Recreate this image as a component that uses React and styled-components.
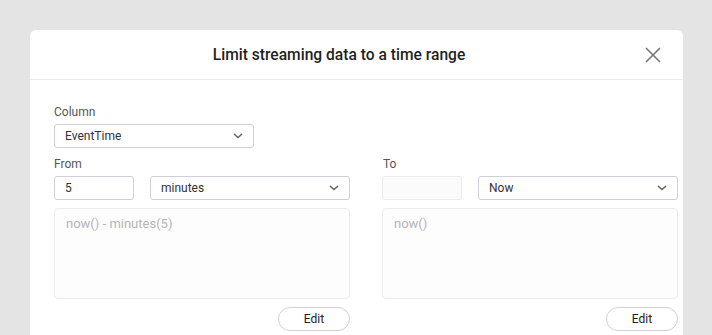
import React from "react";
import styled, { createGlobalStyle } from "styled-components";

const GlobalStyle = createGlobalStyle`
  html, body {
    margin: 0;
    padding: 0;
    background: #e4e4e4;
    font-family: Roboto, "Liberation Sans", Arial, sans-serif;
  }
`;

const Page = styled.div`
  padding: 30px 29px 0 30px;
  height: 335px;
  box-sizing: border-box;
  overflow: hidden;
`;

const Dialog = styled.div`
  background: #fff;
  border-radius: 6px 6px 0 0;
  height: 320px;
`;

const Header = styled.div`
  display: flex;
  align-items: center;
  height: 49px;
  border-bottom: 1px solid #ececec;
  padding-left: 13px;
`;

const Title = styled.div`
  flex: 1;
  text-align: center;
  font-size: 15.6px;
  font-weight: 500;
  color: #1f1f1f;
`;

const CloseButton = styled.button`
  width: 36px;
  height: 36px;
  margin-right: 12px;
  border: none;
  background: none;
  display: flex;
  align-items: center;
  justify-content: center;
  padding: 0;
  cursor: pointer;
`;

const Body = styled.div`
  padding: 24px 6px 0 24px;
`;

const Label = styled.div`
  font-size: 12px;
  line-height: 16px;
  color: #555;
  margin-bottom: 4px;
  padding-left: ${(p) => p.$indent || 0}px;
`;

const Columns = styled.div`
  display: grid;
  grid-template-columns: 296px 296px;
  column-gap: 32px;
  margin-top: 8px;
`;

const Column = styled.div`
  display: flex;
  flex-direction: column;
`;

const InputRow = styled.div`
  display: flex;
  gap: 16px;
`;

const Box = styled.div`
  box-sizing: border-box;
  height: 24px;
  width: ${(p) => p.$width || "auto"};
  flex: ${(p) => (p.$grow ? 1 : "none")};
  border: 1px solid ${(p) => (p.$disabled ? "#ececf0" : "#cfcfd8")};
  background: ${(p) => (p.$disabled ? "#fbfbfb" : "#fff")};
  border-radius: 3px;
  display: flex;
  align-items: center;
  padding: 0 10px;
  font-size: 12px;
  color: #333;
`;

const SelectText = styled.span`
  flex: 1;
`;

const Expression = styled.div`
  box-sizing: border-box;
  margin-top: 8px;
  height: 91px;
  border: 1px solid #ececef;
  border-radius: 4px;
  background: #fdfdfd;
  padding: 7px 11px;
  font-size: 13px;
  color: #b5b5b5;
`;

const Actions = styled.div`
  display: flex;
  justify-content: flex-end;
  margin-top: 8px;
`;

const EditButton = styled.button`
  box-sizing: border-box;
  width: 72px;
  height: 24px;
  border-radius: 12px;
  border: 1px solid #cfcfd8;
  background: #fff;
  font-family: inherit;
  font-size: 12px;
  color: #222;
  cursor: pointer;
`;

const Chevron = () => (
  <svg width="10" height="6" viewBox="0 0 10 6">
    <path d="M1 1l4 3.5L9 1" fill="none" stroke="#666" strokeWidth="1.6" />
  </svg>
);

const Select = ({ value, width, grow }) => (
  <Box $width={width} $grow={grow}>
    <SelectText>{value}</SelectText>
    <Chevron />
  </Box>
);

const Range = ({ label, amount, unit, expression, disabled, indent }) => (
  <Column>
    <Label $indent={indent}>{label}</Label>
    <InputRow>
      <Box $width="80px" $disabled={disabled}>
        {amount}
      </Box>
      <Select value={unit} grow />
    </InputRow>
    <Expression>{expression}</Expression>
    <Actions>
      <EditButton>Edit</EditButton>
    </Actions>
  </Column>
);

export default function App() {
  return (
    <>
      <GlobalStyle />
      <Page>
        <Dialog>
          <Header>
            <Title>Limit streaming data to a time range</Title>
            <CloseButton aria-label="Close">
              <svg width="16" height="16" viewBox="0 0 16 16">
                <path
                  d="M1 1l14 14M15 1L1 15"
                  stroke="#777"
                  strokeWidth="1.6"
                  fill="none"
                />
              </svg>
            </CloseButton>
          </Header>
          <Body>
            <Label>Column</Label>
            <Select value="EventTime" width="200px" />
            <Columns>
              <Range
                label="From"
                amount="5"
                unit="minutes"
                expression="now() - minutes(5)"
              />
              <Range
                label="To"
                amount=""
                unit="Now"
                expression="now()"
                disabled
                indent={1}
              />
            </Columns>
          </Body>
        </Dialog>
      </Page>
    </>
  );
}
